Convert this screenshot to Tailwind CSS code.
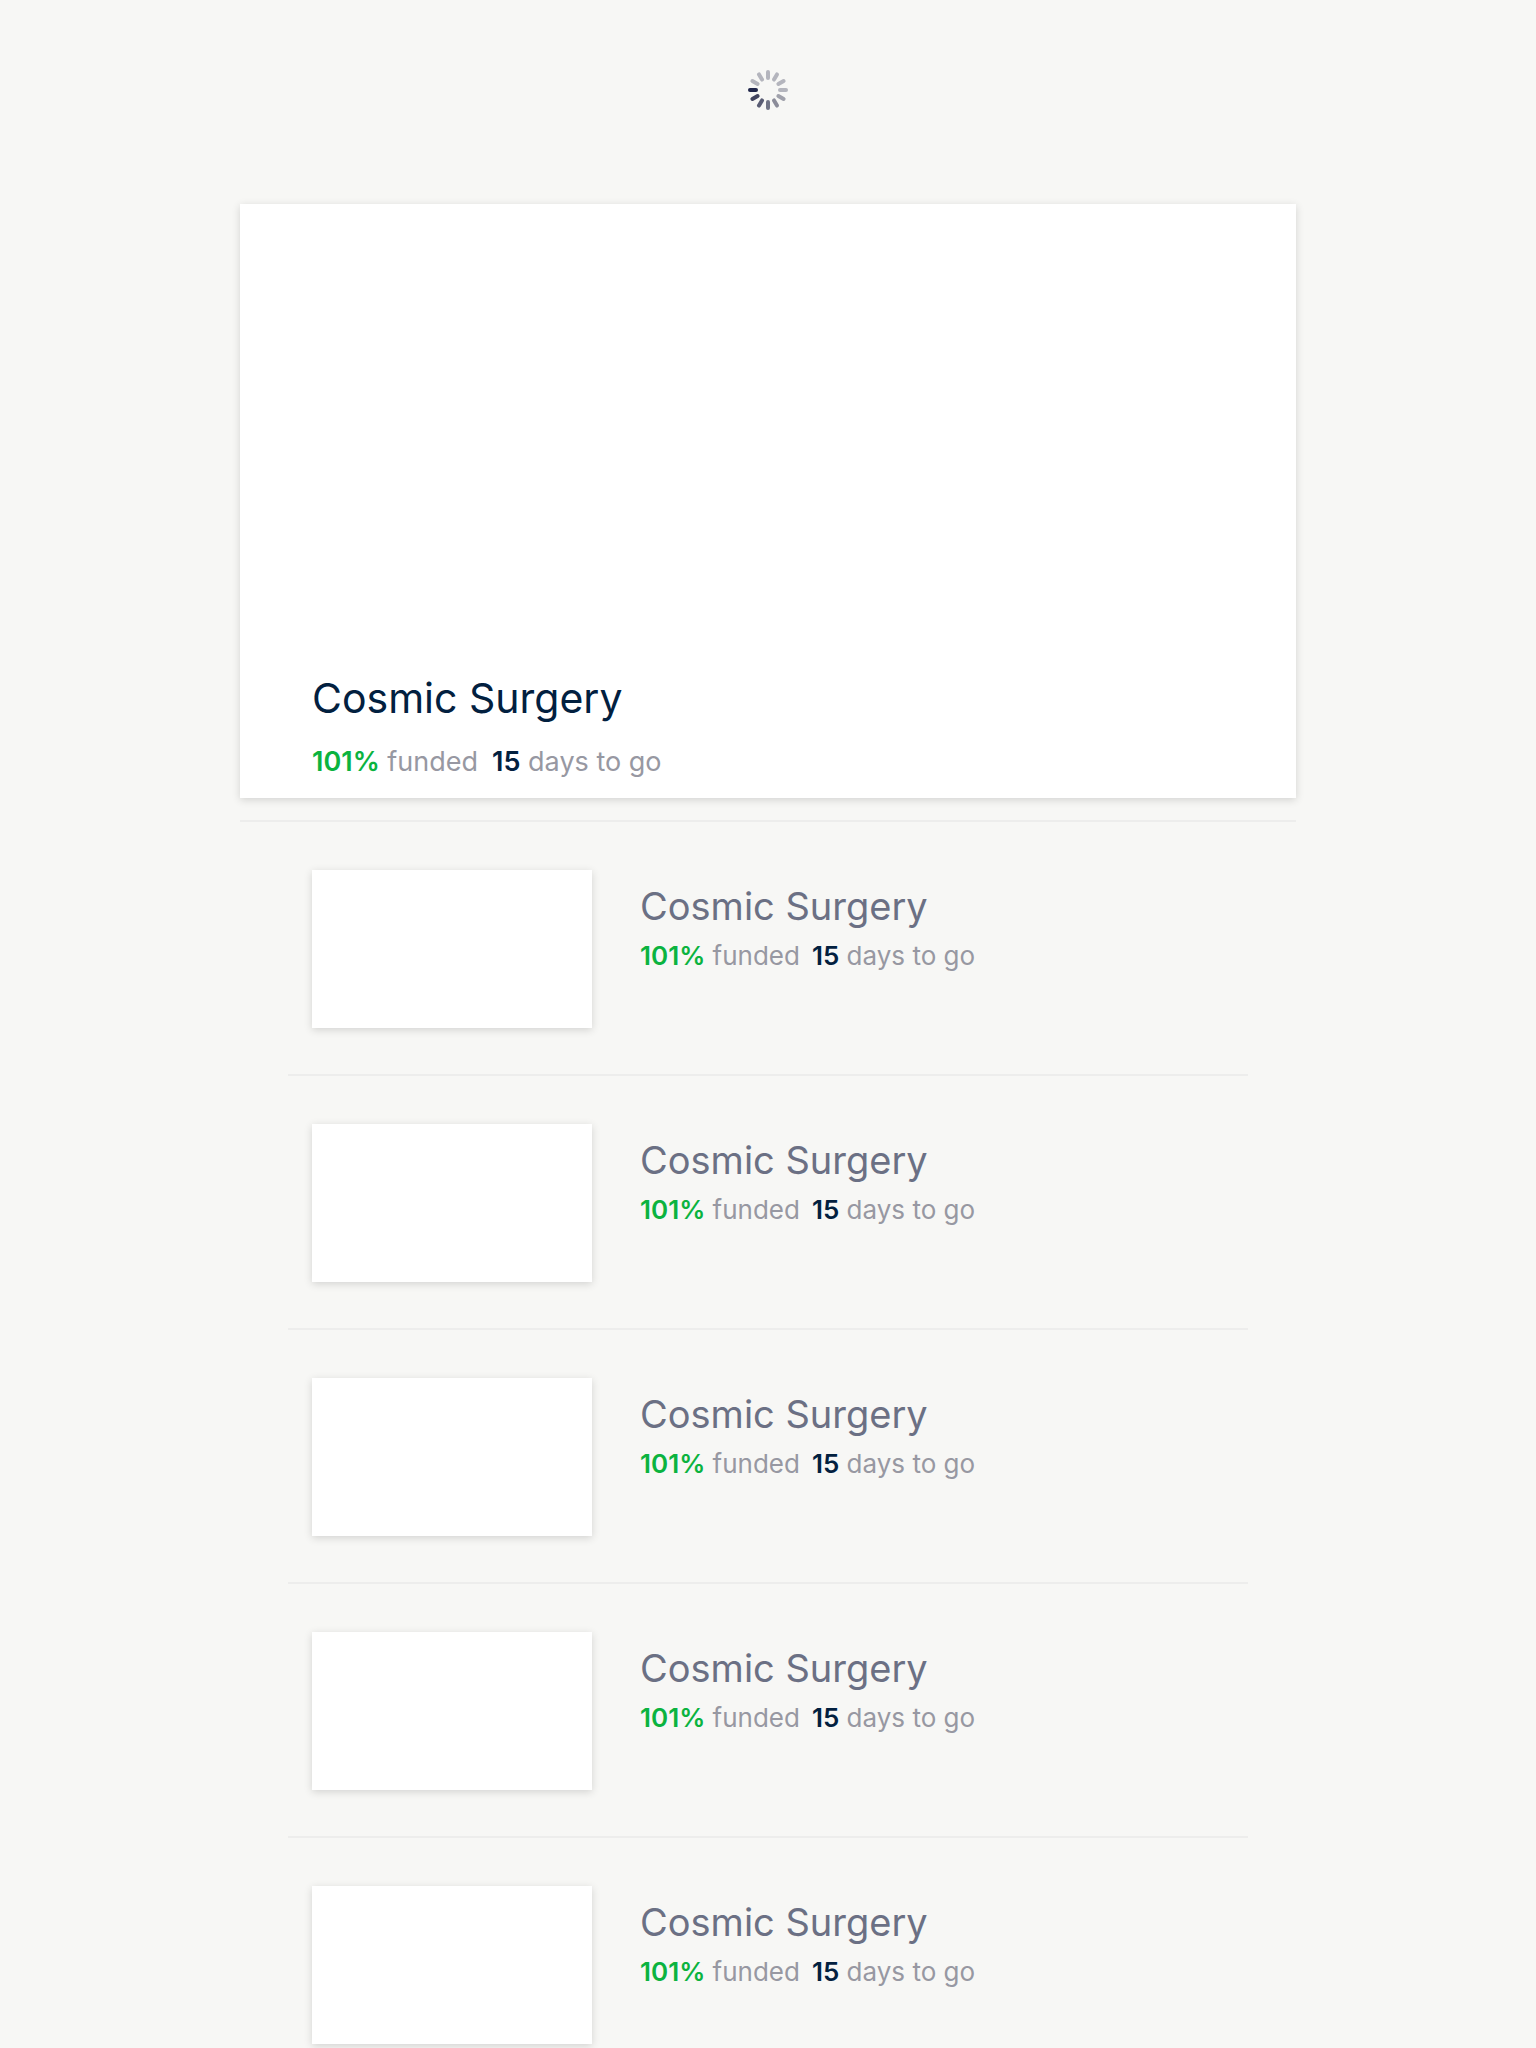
<!DOCTYPE html>
<html lang="en">
<head>
<meta charset="utf-8">
<meta name="viewport" content="width=device-width, initial-scale=1">
<title>Projects</title>
<script src="https://cdn.jsdelivr.net/npm/@tailwindcss/browser@4"></script>
</head>
<body class="bg-[#f7f7f5] font-['Inter',sans-serif]">
<div class="h-screen overflow-hidden">
<header class="flex justify-center pt-[70px] pb-[94px]">
  <svg role="img" aria-label="Loading" class="size-10" viewBox="-20 -20 40 40" stroke-width="4" stroke-linecap="round">
    <path d="M0-18V-12" stroke="#b4b5bd"/>
    <path d="M0-18V-12" stroke="#b4b5bd" transform="rotate(30)"/>
    <path d="M0-18V-12" stroke="#b4b5bd" transform="rotate(60)"/>
    <path d="M0-18V-12" stroke="#b4b5bd" transform="rotate(90)"/>
    <path d="M0-18V-12" stroke="#a0a1ab" transform="rotate(120)"/>
    <path d="M0-18V-12" stroke="#8b8c99" transform="rotate(150)"/>
    <path d="M0-18V-12" stroke="#717486" transform="rotate(180)"/>
    <path d="M0-18V-12" stroke="#5a5d74" transform="rotate(210)"/>
    <path d="M0-18V-12" stroke="#41445f" transform="rotate(240)"/>
    <path d="M0-18V-12" stroke="#20264a" transform="rotate(270)"/>
    <path d="M0-18V-12" stroke="#b4b5bd" transform="rotate(300)"/>
    <path d="M0-18V-12" stroke="#b4b5bd" transform="rotate(330)"/>
  </svg>
</header>
<main class="mx-auto w-full max-w-[1056px]">
  <article class="bg-white px-[72px] pt-[466px] pb-[18px] shadow-[0_2px_8px_rgba(0,0,0,0.15)]">
    <h1 class="text-[41px] leading-[56px] text-[#02203f]">Cosmic Surgery</h1>
    <p class="mt-[18px] flex gap-[14px] text-[27px] leading-9 text-[#9798a2]">
      <span><strong class="font-semibold text-[#0bb33f]">101%</strong> funded</span>
      <span><strong class="font-semibold text-[#02203f]">15</strong> days to go</span>
    </p>
  </article>
  <ul class="mt-[22px] border-t-2 border-[#ededec] px-12">
    <li class="flex gap-12 border-b-2 border-[#ededec] px-6 pt-12 pb-[46px]">
      <div class="h-[158px] w-[280px] shrink-0 bg-white shadow-[0_2px_8px_rgba(0,0,0,0.15)]"></div>
      <div class="pt-3">
        <h2 class="text-[38px] leading-[48px] text-[#6b7084]">Cosmic Surgery</h2>
        <p class="mt-[10px] flex gap-3 text-[26px] leading-8 text-[#9798a2]">
          <span><strong class="font-semibold text-[#0bb33f]">101%</strong> funded</span>
          <span><strong class="font-semibold text-[#02203f]">15</strong> days to go</span>
        </p>
      </div>
    </li>
    <li class="flex gap-12 border-b-2 border-[#ededec] px-6 pt-12 pb-[46px]">
      <div class="h-[158px] w-[280px] shrink-0 bg-white shadow-[0_2px_8px_rgba(0,0,0,0.15)]"></div>
      <div class="pt-3">
        <h2 class="text-[38px] leading-[48px] text-[#6b7084]">Cosmic Surgery</h2>
        <p class="mt-[10px] flex gap-3 text-[26px] leading-8 text-[#9798a2]">
          <span><strong class="font-semibold text-[#0bb33f]">101%</strong> funded</span>
          <span><strong class="font-semibold text-[#02203f]">15</strong> days to go</span>
        </p>
      </div>
    </li>
    <li class="flex gap-12 border-b-2 border-[#ededec] px-6 pt-12 pb-[46px]">
      <div class="h-[158px] w-[280px] shrink-0 bg-white shadow-[0_2px_8px_rgba(0,0,0,0.15)]"></div>
      <div class="pt-3">
        <h2 class="text-[38px] leading-[48px] text-[#6b7084]">Cosmic Surgery</h2>
        <p class="mt-[10px] flex gap-3 text-[26px] leading-8 text-[#9798a2]">
          <span><strong class="font-semibold text-[#0bb33f]">101%</strong> funded</span>
          <span><strong class="font-semibold text-[#02203f]">15</strong> days to go</span>
        </p>
      </div>
    </li>
    <li class="flex gap-12 border-b-2 border-[#ededec] px-6 pt-12 pb-[46px]">
      <div class="h-[158px] w-[280px] shrink-0 bg-white shadow-[0_2px_8px_rgba(0,0,0,0.15)]"></div>
      <div class="pt-3">
        <h2 class="text-[38px] leading-[48px] text-[#6b7084]">Cosmic Surgery</h2>
        <p class="mt-[10px] flex gap-3 text-[26px] leading-8 text-[#9798a2]">
          <span><strong class="font-semibold text-[#0bb33f]">101%</strong> funded</span>
          <span><strong class="font-semibold text-[#02203f]">15</strong> days to go</span>
        </p>
      </div>
    </li>
    <li class="flex gap-12 border-b-2 border-[#ededec] px-6 pt-12 pb-[46px]">
      <div class="h-[158px] w-[280px] shrink-0 bg-white shadow-[0_2px_8px_rgba(0,0,0,0.15)]"></div>
      <div class="pt-3">
        <h2 class="text-[38px] leading-[48px] text-[#6b7084]">Cosmic Surgery</h2>
        <p class="mt-[10px] flex gap-3 text-[26px] leading-8 text-[#9798a2]">
          <span><strong class="font-semibold text-[#0bb33f]">101%</strong> funded</span>
          <span><strong class="font-semibold text-[#02203f]">15</strong> days to go</span>
        </p>
      </div>
    </li>
  </ul>
</main>
</div>
</body>
</html>
